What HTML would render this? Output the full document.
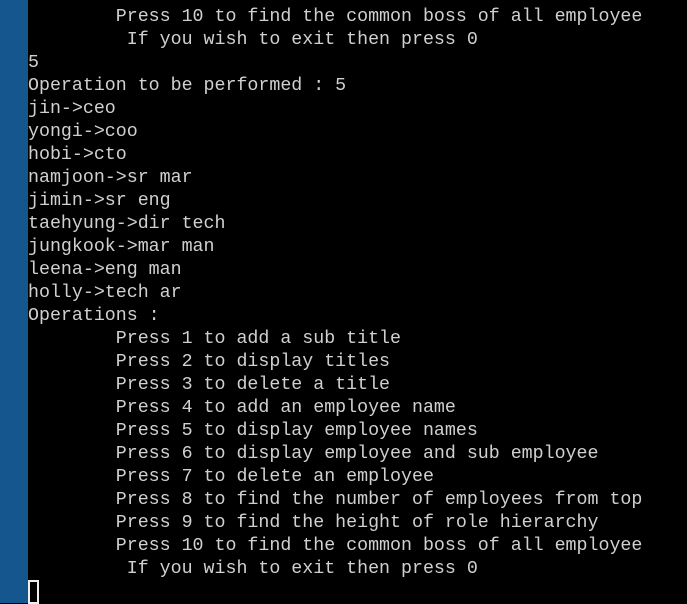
<!DOCTYPE html>
<html><head><style>
html,body{margin:0;padding:0;width:687px;height:603px;overflow:hidden;background:#000;}
.bar{position:absolute;left:0;top:0;width:28px;height:603px;background:#16568f;}
pre{position:absolute;left:28px;top:6px;margin:0;font-family:"Liberation Mono",monospace;font-size:18.3px;line-height:23px;color:#d0d0d0;}
.cur{position:absolute;left:28px;top:580px;width:7px;height:20px;border:2px solid #eee;}
</style></head><body>
<div class="bar"></div>
<pre>        Press 10 to find the common boss of all employee
         If you wish to exit then press 0
5
Operation to be performed : 5
jin-&gt;ceo
yongi-&gt;coo
hobi-&gt;cto
namjoon-&gt;sr mar
jimin-&gt;sr eng
taehyung-&gt;dir tech
jungkook-&gt;mar man
leena-&gt;eng man
holly-&gt;tech ar
Operations :
        Press 1 to add a sub title
        Press 2 to display titles
        Press 3 to delete a title
        Press 4 to add an employee name
        Press 5 to display employee names
        Press 6 to display employee and sub employee
        Press 7 to delete an employee
        Press 8 to find the number of employees from top
        Press 9 to find the height of role hierarchy
        Press 10 to find the common boss of all employee
         If you wish to exit then press 0</pre>
<div class="cur"></div>
</body></html>
